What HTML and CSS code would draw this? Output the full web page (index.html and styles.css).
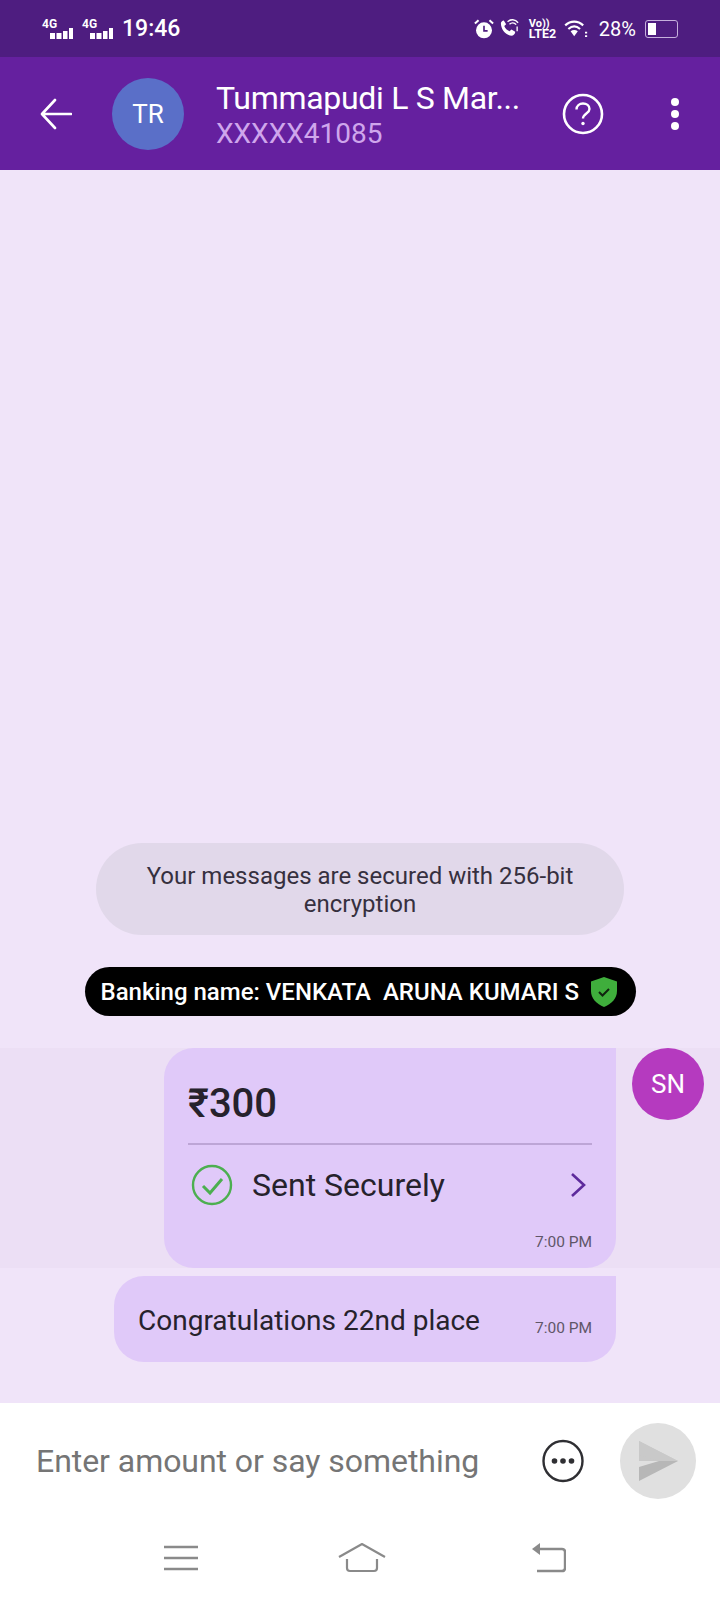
FILE: index.html
```html
<!DOCTYPE html>
<html lang="en">
<head>
  <meta charset="UTF-8" />
  <meta name="viewport" content="width=device-width, initial-scale=1.0"/>
  <title>Chat</title>
  <link rel="stylesheet" href="styles.css">
</head>
<body>
  <div class="status-bar">
    <div class="status-left">
      <div class="signal">
        <span class="signal-label">4G</span>
        <svg width="23" height="11" viewBox="0 0 23 11"><path fill="#fff" d="M0 5h5v6H0zM6.500 5h5v6h-5zM13 3h4.500v8H13zM19 0h4v11h-4z"/></svg>
      </div>
      <div class="signal">
        <span class="signal-label">4G</span>
        <svg width="23" height="11" viewBox="0 0 23 11"><path fill="#fff" d="M0 5h5v6H0zM6.500 5h5v6h-5zM13 3h4.500v8H13zM19 0h4v11h-4z"/></svg>
      </div>
      <span class="clock">19:46</span>
    </div>
    <div class="status-right">
      <svg class="icon-alarm" width="20" height="20" viewBox="0 0 22 22">
        <circle cx="11" cy="12.500" r="8.800" fill="#fff"/>
        <path d="M11 7.500v5.500h4" fill="none" stroke="#4e1d80" stroke-width="1.800"/>
        <path d="M1 5l4-3.600M21 5l-4-3.600" stroke="#fff" stroke-width="2.200" fill="none"/>
      </svg>
      <svg class="icon-call" width="21" height="21" viewBox="0 0 22 22">
        <path d="M2 5.500c0-1.500 1.500-3 3-3l2.500 4-2 2c1 2.500 3 4.500 5.500 5.500l2-2 4 2.500c0 2-1.500 4-3.500 4C7 18.500 2 12 2 5.500z" fill="#fff"/>
        <path d="M9 4c3-3 8-3 11 1M11 6.500c2-2 5-2 7 .5" fill="none" stroke="#fff" stroke-width="1.400"/>
        <path d="M19 9v5" stroke="#fff" stroke-width="1.400"/>
      </svg>
      <div class="volte">
        <span class="volte-top">Vo))</span>
        <span class="volte-bottom">LTE2</span>
      </div>
      <svg class="icon-wifi" width="24" height="18" viewBox="0 0 26 20">
        <path d="M1 6c6-5.500 14-5.500 20 0M4.500 10c4-3.500 9-3.500 13 0" fill="none" stroke="#fff" stroke-width="2.400"/>
        <path d="M7 12.500c2.500-2 5.500-2 8 0L11 18z" fill="#fff"/>
        <path d="M23 13h2.400v2H23zM23 17h2.400v2H23z" fill="#fff"/>
      </svg>
      <span class="battery-text">28%</span>
      <div class="battery"><div class="battery-level"></div></div>
    </div>
  </div>

  <header class="app-bar">
    <svg class="back-icon" width="32" height="32" viewBox="0 0 32 32">
      <path d="M31 16H3M15 2L2 16l13 14" fill="none" stroke="#fff" stroke-width="2.600" stroke-linecap="round" stroke-linejoin="round"/>
    </svg>
    <div class="avatar avatar-tr">TR</div>
    <div class="contact">
      <div class="contact-name">Tummapudi L S Mar...</div>
      <div class="contact-phone">XXXXX41085</div>
    </div>
    <svg class="help-icon" width="42" height="42" viewBox="0 0 42 42">
      <circle cx="21" cy="21" r="19" fill="none" stroke="#fff" stroke-width="2.600"/>
      <path d="M14.500 16.500c0-3.800 3-6 6.500-6s6.500 2.200 6.500 5.500c0 4.500-6.500 4.500-6.500 9.500" fill="none" stroke="#fff" stroke-width="2.400"/>
      <circle cx="21" cy="30.500" r="1.700" fill="#fff"/>
    </svg>
    <div class="more-icon"><span></span><span></span><span></span></div>
  </header>

  <main class="chat">
    <div class="notice">Your messages are secured with 256-bit encryption</div>
    <div class="banking">
      <span>Banking name: VENKATA&nbsp; ARUNA KUMARI S</span>
      <svg width="26" height="30" viewBox="0 0 26 30">
        <path d="M13 0l13 4.500v9.500c0 7.500-5.500 13-13 16C5.500 27 0 21.500 0 14V4.500z" fill="#3fae3c"/>
        <path d="M8 15l3.500 3.500L18 12" fill="none" stroke="#10240f" stroke-width="2"/>
      </svg>
    </div>

    <div class="message-row first">
      <div class="bubble payment">
        <div class="amount">₹300</div>
        <div class="sent-row">
          <svg width="42" height="42" viewBox="0 0 42 42">
            <circle cx="21" cy="21" r="19" fill="none" stroke="#4caf50" stroke-width="2.400"/>
            <path d="M12 22l7 7 12-14" fill="none" stroke="#4caf50" stroke-width="3"/>
          </svg>
          <span class="sent-text">Sent Securely</span>
          <svg class="chevron" width="16" height="26" viewBox="0 0 16 26">
            <path d="M2 2l12 11L2 24" fill="none" stroke="#5d2a9c" stroke-width="2.600"/>
          </svg>
        </div>
        <div class="time time-bottom">7:00 PM</div>
      </div>
      <div class="avatar avatar-sn">SN</div>
    </div>

    <div class="message-row second">
      <div class="bubble text-bubble">
        <span class="text-body">Congratulations 22nd place</span>
        <span class="time">7:00 PM</span>
      </div>
    </div>
  </main>

  <div class="input-bar">
    <span class="placeholder">Enter amount or say something</span>
    <svg class="dots-icon" width="42" height="44" viewBox="0 0 42 44">
      <ellipse cx="21" cy="22" rx="19.500" ry="20" fill="none" stroke="#2f2f33" stroke-width="2.400"/>
      <circle cx="12.500" cy="22" r="2.800" fill="#2f2f33"/>
      <circle cx="21" cy="22" r="2.800" fill="#2f2f33"/>
      <circle cx="29.500" cy="22" r="2.800" fill="#2f2f33"/>
    </svg>
    <div class="send-btn">
      <svg width="39" height="40" viewBox="0 0 39 40">
        <path d="M0 0l39 20-39 0 0-6 20 6-20-6z" fill="#c9c9c9"/>
        <path d="M0 0l39 20H20L0 14z" fill="#c9c9c9"/>
        <path d="M0 40l39-20H20L0 26z" fill="#b7b7b7"/>
      </svg>
    </div>
  </div>

  <nav class="nav-bar">
    <svg class="nav-menu" width="34" height="26" viewBox="0 0 34 26">
      <path d="M0 2h34M0 13h34M0 24h34" stroke="#8a8a8a" stroke-width="2.400"/>
    </svg>
    <svg class="nav-home" width="48" height="30" viewBox="0 0 48 30">
      <path d="M1 14L24 1l23 13" fill="none" stroke="#8a8a8a" stroke-width="2.200"/>
      <path d="M9 16v9c0 2 1 3 3 3h24c2 0 3-1 3-3v-9" fill="none" stroke="#8a8a8a" stroke-width="2.200"/>
    </svg>
    <svg class="nav-back" width="34" height="30" viewBox="0 0 34 30">
      <path d="M6 6h24c2 0 3 1 3 3v16c0 2-1 3-3 3H5" fill="none" stroke="#8a8a8a" stroke-width="2.400"/>
      <path d="M0 6l8-6v12z" fill="#8a8a8a"/>
    </svg>
  </nav>
</body>
</html>
```

FILE: styles.css
```css
* {
  box-sizing: border-box;
}

body {
  font-family: Roboto, sans-serif;
  background-color: #fff;
  margin: 0;
  width: 720px;
  height: 1600px;
  display: flex;
  flex-direction: column;
  color: #26222c;
}

/* status bar */
.status-bar {
  height: 57px;
  background-color: #4e1d80;
  color: #fff;
  display: flex;
  justify-content: space-between;
  align-items: center;
  padding: 0 42px 0 42px;
}

.status-left,
.status-right {
  display: flex;
  align-items: center;
}

.signal {
  width: 31px;
  height: 20px;
  margin-right: 9px;
  position: relative;
}

.signal svg {
  position: absolute;
  right: 0;
  bottom: 0;
}

.signal-label {
  position: absolute;
  left: 0;
  top: -1px;
  font-size: 12px;
  font-weight: 700;
  line-height: 12px;
}

.clock {
  font-size: 23px;
  font-weight: 500;
}

.icon-alarm {
  margin-right: 5px;
}

.volte {
  width: 26px;
  display: flex;
  flex-direction: column;
  align-items: flex-start;
  margin: 0 9px;
  line-height: 10px;
  font-weight: 700;
  font-size: 12.500px;
}

.volte-top {
  font-size: 11px;
}

.icon-wifi {
  margin-right: 11px;
}

.battery-text {
  font-size: 20px;
  margin-right: 9px;
}

.battery {
  width: 33px;
  height: 18px;
  border: 1.500px solid #c6b0dd;
  border-radius: 3px;
  padding: 2px;
}

.battery-level {
  width: 8px;
  height: 100%;
  background-color: #fff;
}

/* app bar */
.app-bar {
  height: 113px;
  background-color: #65209f;
  display: flex;
  align-items: center;
  padding-left: 40px;
}

.back-icon {
  margin-right: 40px;
}

.avatar {
  width: 72px;
  height: 72px;
  border-radius: 50%;
  color: #fff;
  font-size: 26px;
  display: flex;
  align-items: center;
  justify-content: center;
  flex-shrink: 0;
}

.avatar-tr {
  background-color: #5a6fc8;
}

.avatar-sn {
  background-color: #b53abf;
  margin-left: 16px;
}

.contact {
  width: 346px;
  margin-left: 32px;
}

.contact-name {
  color: #fff;
  font-size: 32px;
  line-height: 40px;
  letter-spacing: -0.3px;
}

.contact-phone {
  color: #cfa6ec;
  font-size: 28px;
  line-height: 32px;
}

.more-icon {
  margin-left: 67px;
  display: flex;
  flex-direction: column;
  gap: 4px;
}

.more-icon span {
  width: 8px;
  height: 8px;
  border-radius: 50%;
  background-color: #fff;
}

/* chat */
.chat {
  flex: 1;
  background-color: #f0e4f9;
  display: flex;
  flex-direction: column;
  justify-content: flex-end;
  align-items: center;
  padding-bottom: 41px;
}

.notice {
  width: 528px;
  height: 92px;
  background-color: #e1d8ea;
  border-radius: 46px;
  padding: 19px 40px 0;
  text-align: center;
  font-size: 24px;
  line-height: 28px;
  color: #36303f;
}

.banking {
  margin-top: 32px;
  width: 551px;
  height: 49px;
  background-color: #000;
  color: #fff;
  border-radius: 25px;
  display: flex;
  align-items: center;
  justify-content: space-between;
  padding: 0 19px 0 16px;
  font-size: 24px;
  font-weight: 500;
}

.message-row {
  width: 100%;
  display: flex;
}

.message-row.first {
  margin-top: 32px;
  background-color: #ecdff5;
}

.message-row.second {
  margin-top: 8px;
}

.bubble {
  background-color: #e0c9f9;
  border-radius: 30px 0 30px 30px;
}

.payment {
  width: 452px;
  height: 220px;
  margin-left: 164px;
  padding: 0 24px;
}

.amount {
  height: 97px;
  padding-top: 32px;
  font-size: 40px;
  font-weight: 500;
  line-height: 48px;
  border-bottom: 2px solid #bda5d6;
}

.sent-row {
  display: flex;
  align-items: center;
  height: 80px;
  padding: 0 6px 0 3px;
}

.sent-text {
  font-size: 32px;
  margin-left: 19px;
  flex: 1;
}

.time {
  font-size: 15.500px;
  color: #5f5668;
}

.time-bottom {
  text-align: right;
  padding-top: 8px;
}

.text-bubble {
  width: 502px;
  height: 86px;
  margin-left: 114px;
  padding: 0 24px;
  display: flex;
  align-items: center;
  justify-content: space-between;
}

.text-body {
  font-size: 28px;
  padding-top: 2px;
}

.text-bubble .time {
  padding-top: 18px;
}

/* input */
.input-bar {
  height: 115px;
  display: flex;
  align-items: center;
  padding-left: 36px;
}

.placeholder {
  width: 506px;
  font-size: 32px;
  letter-spacing: -0.05px;
  color: #757575;
}

.dots-icon {
  flex-shrink: 0;
}

.send-btn {
  width: 76px;
  height: 76px;
  border-radius: 50%;
  background-color: #e0e0e0;
  margin-left: 36px;
  display: flex;
  align-items: center;
  justify-content: center;
}

/* nav */
.nav-bar {
  height: 82px;
  display: flex;
  align-items: flex-start;
  padding: 27px 0 0 164px;
}

.nav-home {
  margin: -2px 0 0 140px;
}

.nav-back {
  margin: -2px 0 0 146px;
}
```
